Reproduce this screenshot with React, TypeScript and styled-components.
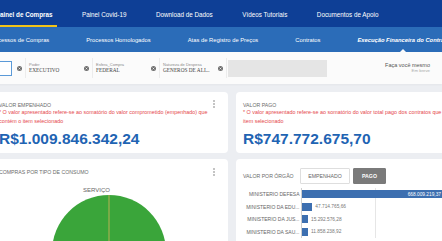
import styled, { createGlobalStyle } from 'styled-components'

const GlobalStyle = createGlobalStyle`
  html, body {
    margin: 0;
    padding: 0;
  }
  body {
    width: 442px;
    height: 241px;
    overflow: hidden;
    background: #eceef2;
    font-family: 'Liberation Sans', Arial, sans-serif;
  }
`

const Page = styled.div`
  width: 462px;
  margin-left: -20px;
`

const TopNav = styled.nav`
  display: flex;
  height: 27px;
  padding-left: 11.3px;
  gap: 20.5px;
  background: #0e3f96;
`

const TopNavItem = styled.div<{ $active?: boolean }>`
  display: flex;
  align-items: center;
  padding: 3px 4.5px 0;
  font-size: 6.3px;
  color: #fff;
  white-space: nowrap;
  font-weight: ${p => (p.$active ? 700 : 400)};
  border-bottom: 2px solid ${p => (p.$active ? '#f2c318' : 'transparent')};
`

const SubNav = styled.nav`
  display: flex;
  height: 25px;
  padding-left: 9px;
  gap: 37px;
  background: #2b6cb8;
`

const SubNavItem = styled.div<{ $active?: boolean }>`
  position: relative;
  display: flex;
  align-items: center;
  font-size: 5.8px;
  color: #fff;
  white-space: nowrap;
  font-weight: ${p => (p.$active ? 700 : 400)};
  font-style: ${p => (p.$active ? 'italic' : 'normal')};

  ${p =>
    p.$active &&
    `
    &::after {
      content: '';
      position: absolute;
      left: 43px;
      bottom: 0;
      border-left: 3px solid transparent;
      border-right: 3px solid transparent;
      border-bottom: 3px solid #fbfbfb;
    }
  `}
`

const FilterBar = styled.div`
  display: flex;
  align-items: center;
  height: 32px;
  padding-left: 8px;
  padding-right: 12px;
  background: #fbfbfb;
  box-shadow: 0 1px 2px rgba(0, 0, 0, 0.04);
`

const SearchField = styled.div`
  display: flex;
  align-items: center;
  gap: 5px;
  height: 20px;
  padding-right: 3px;
  border-right: 1px solid #ececec;
`

const SearchBox = styled.div`
  width: 22px;
  height: 13px;
  background: #fff;
  border: 1px solid #5b9ad8;
`

const Field = styled.div`
  box-sizing: border-box;
  width: 67px;
  height: 20px;
  display: flex;
  align-items: center;
  justify-content: space-between;
  padding: 0 3px 0 3px;
  border-right: 1px solid #ececec;

  &:last-of-type {
    border-right: none;
  }
`

const FieldText = styled.div`
  display: flex;
  flex-direction: column;
  padding-bottom: 2px;
`

const FieldLabel = styled.span`
  font-size: 4px;
  line-height: 5px;
  color: #8a8a8a;
  white-space: nowrap;
`

const FieldValue = styled.span`
  font-family: 'Liberation Serif', 'Times New Roman', serif;
  font-size: 5.3px;
  line-height: 6px;
  color: #444;
  white-space: nowrap;
`

const EmptySlot = styled.div`
  width: 99px;
  height: 17px;
  margin-left: 1px;
  background: #e5e5e5;
`

const DiyBox = styled.div`
  margin-left: auto;
  display: flex;
  flex-direction: column;
  align-items: flex-end;
`

const DiyTitle = styled.span`
  font-size: 5.5px;
  line-height: 6px;
  color: #555;
`

const DiySub = styled.span`
  font-size: 4.3px;
  line-height: 6px;
  color: #aaa;
`

const Content = styled.div`
  display: grid;
  grid-template-columns: 236px 242px;
  grid-template-rows: 61px 120px;
  column-gap: 8px;
  row-gap: 6px;
  padding: 8px 0 0 12px;
`

const Card = styled.div<{ $top?: number }>`
  position: relative;
  background: #fff;
  border-radius: 4px;
  padding: ${p => p.$top ?? 10}px 7px 4px 7px;
  overflow: hidden;
`

const Kebab = styled.div<{ $top: number }>`
  position: absolute;
  top: ${p => p.$top}px;
  right: 13px;
  display: flex;
  flex-direction: column;
  gap: 1.6px;

  span {
    width: 1.6px;
    height: 1.6px;
    border-radius: 50%;
    background: #b9b9b9;
  }
`

const CardTitle = styled.div`
  font-size: 5.2px;
  line-height: 6px;
  color: #6b6b6b;
  white-space: nowrap;
`

const Notice = styled.div`
  font-size: 5.4px;
  line-height: 9px;
  color: #e5484d;
`

const Amount = styled.div`
  margin-top: 4px;
  font-size: 15.5px;
  line-height: 18px;
  font-weight: 700;
  color: #1f64b3;
  white-space: nowrap;
`

const PieArea = styled.div`
  margin-top: 2px;
  height: 80px;
`

const ChartHeader = styled.div`
  display: flex;
  align-items: center;
  height: 16px;
  margin-bottom: 4px;
`

const HeaderTitle = styled(CardTitle)`
  width: 57px;
`

const Toggle = styled.button<{ $on?: boolean }>`
  box-sizing: border-box;
  height: 16px;
  margin: 0 3px 0 0;
  padding: 0;
  width: ${p => (p.$on ? 33 : 50)}px;
  font-family: inherit;
  font-size: 5.2px;
  font-weight: ${p => (p.$on ? 700 : 400)};
  color: ${p => (p.$on ? '#fff' : '#666')};
  background: ${p => (p.$on ? '#7a7a7a' : '#fff')};
  border: 1px solid ${p => (p.$on ? '#7a7a7a' : '#dedede')};
  border-radius: 1px;
`

const BarRow = styled.div`
  display: flex;
  height: 12.5px;
`

const BarLabel = styled.div`
  width: 58px;
  padding-right: 1.5px;
  box-sizing: border-box;
  display: flex;
  align-items: center;
  justify-content: flex-end;
  font-size: 5px;
  color: #666;
  white-space: nowrap;
`

const BarTrack = styled.div`
  flex: 1;
  display: flex;
  align-items: center;
  border-left: 1px solid #cfcfcf;
  background: linear-gradient(
    to right,
    transparent 73px,
    #e6e6e6 73px,
    #e6e6e6 74px,
    transparent 74px
  );
`

const Bar = styled.div`
  height: 8px;
  background: #3d6fb0;
  display: flex;
  align-items: center;
  justify-content: flex-end;
  flex-shrink: 0;
  box-sizing: border-box;
  padding-right: 6px;
  font-size: 4.8px;
  color: #fff;
  white-space: nowrap;
`

const BarValue = styled.span`
  margin-left: 3px;
  font-size: 4.8px;
  color: #777;
  white-space: nowrap;
`

const ClearIcon = () => (
  <svg width="5" height="5" viewBox="0 0 10 10">
    <circle cx="5" cy="5" r="5" fill="#6e6e6e" />
    <path d="M3.2 3.2 L6.8 6.8 M6.8 3.2 L3.2 6.8" stroke="#fff" strokeWidth="1.3" />
  </svg>
)

const Dots = ({ top }: { top: number }) => (
  <Kebab $top={top}>
    <span />
    <span />
    <span />
  </Kebab>
)

const filters = [
  { label: 'Poder', value: 'EXECUTIVO' },
  { label: 'Esfera_Compra', value: 'FEDERAL' },
  { label: 'Natureza de Despesa', value: 'GENEROS DE ALI...' },
]

const orgaos = [
  { name: 'MINISTERIO DEFESA', value: 668009219.37, text: '668.009.219,37' },
  { name: 'MINISTERIO DA EDU...', value: 47714765.66, text: '47.714.765,66' },
  { name: 'MINISTERIO DA JUS...', value: 15292576.28, text: '15.292.576,28' },
  { name: 'MINISTERIO DA SAU...', value: 11858238.92, text: '11.858.238,92' },
]

const maxValor = orgaos[0].value
const BAR_SPAN = 145

const App = () => {
  return (
    <>
      <GlobalStyle />
      <Page>
        <TopNav>
          <TopNavItem $active>Painel de Compras</TopNavItem>
          <TopNavItem>Painel Covid-19</TopNavItem>
          <TopNavItem>Download de Dados</TopNavItem>
          <TopNavItem>Vídeos Tutoriais</TopNavItem>
          <TopNavItem>Documentos de Apoio</TopNavItem>
        </TopNav>
        <SubNav>
          <SubNavItem>Processos de Compras</SubNavItem>
          <SubNavItem>Processos Homologados</SubNavItem>
          <SubNavItem>Atas de Registro de Preços</SubNavItem>
          <SubNavItem>Contratos</SubNavItem>
          <SubNavItem $active>Execução Financeira do Contrato</SubNavItem>
        </SubNav>

        <FilterBar>
          <SearchField>
            <SearchBox />
            <ClearIcon />
          </SearchField>
          {filters.map(f => (
            <Field key={f.label}>
              <FieldText>
                <FieldLabel>{f.label}</FieldLabel>
                <FieldValue>{f.value}</FieldValue>
              </FieldText>
              <ClearIcon />
            </Field>
          ))}
          <EmptySlot />
          <DiyBox>
            <DiyTitle>Faça você mesmo</DiyTitle>
            <DiySub>Em breve</DiySub>
          </DiyBox>
        </FilterBar>

        <Content>
          <Card>
            <Dots top={8} />
            <CardTitle>VALOR EMPENHADO</CardTitle>
            <Notice>
              * O valor apresentado refere-se ao somatório do valor comprometido (empenhado) que
              contém o item selecionado
            </Notice>
            <Amount>R$1.009.846.342,24</Amount>
          </Card>
          <Card>
            <CardTitle>VALOR PAGO</CardTitle>
            <Notice>
              * O valor apresentado refere-se ao somatório do valor total pago dos contratos que
              contém o item selecionado
            </Notice>
            <Amount>R$747.772.675,70</Amount>
          </Card>

          <Card>
            <Dots top={9} />
            <CardTitle>COMPRAS POR TIPO DE CONSUMO</CardTitle>
            <PieArea>
              <svg width="222" height="80" viewBox="0 0 222 80">
                <text
                  x="111"
                  y="15"
                  textAnchor="end"
                  fontSize="6"
                  fill="#666"
                  fontFamily="Liberation Sans, Arial, sans-serif"
                >
                  SERVIÇO
                </text>
                <circle cx="110" cy="75" r="57" fill="#3aa53a" />
                <line x1="110" y1="75" x2="110" y2="18" stroke="#d9b55a" strokeWidth="0.8" />
              </svg>
            </PieArea>
          </Card>
          <Card $top={9}>
            <ChartHeader>
              <HeaderTitle>VALOR POR ÓRGÃO</HeaderTitle>
              <Toggle>EMPENHADO</Toggle>
              <Toggle $on>PAGO</Toggle>
            </ChartHeader>
            {orgaos.map((o, i) => (
              <BarRow key={o.name}>
                <BarLabel>{o.name}</BarLabel>
                <BarTrack>
                  <Bar style={{ width: Math.max(2, (o.value / maxValor) * BAR_SPAN) }}>
                    {i === 0 ? o.text : null}
                  </Bar>
                  {i > 0 && <BarValue>{o.text}</BarValue>}
                </BarTrack>
              </BarRow>
            ))}
          </Card>
        </Content>
      </Page>
    </>
  )
}

export default App
